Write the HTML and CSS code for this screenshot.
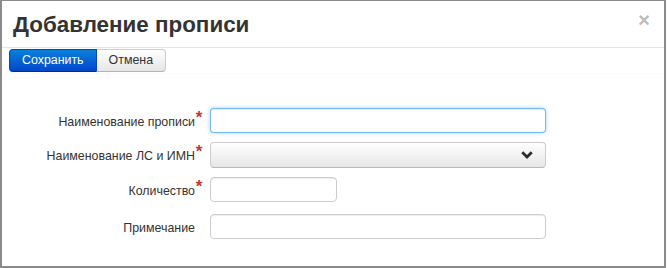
FILE: index.html
```html
<!DOCTYPE html>
<html>
<head>
	<meta charset="utf-8">
	<title>Добавление прописи</title>
	<link rel="stylesheet" href="styles.css">
</head>
<body>
	<div class="modal">
		<div class="modal-header">
			<h3 class="modal-title">Добавление прописи</h3>
			<span class="close">&times;</span>
		</div>

		<div class="toolbar">
			<button class="btn btn-primary">Сохранить</button><button class="btn btn-default">Отмена</button>
		</div>

		<form class="form">
			<div class="form-row">
				<label class="form-label">Наименование прописи<span class="req">*</span></label>
				<input class="form-input focused" type="text">
			</div>
			<div class="form-row">
				<label class="form-label">Наименование ЛС и ИМН<span class="req">*</span></label>
				<div class="form-select">
					<svg class="chevron" width="12" height="8" viewBox="0 0 12 8"><path d="M0.3 2.2 L2.2 0.3 L6 4.1 L9.8 0.3 L11.7 2.2 L6 7.9 Z" fill="#2b2b2b"/></svg>
				</div>
			</div>
			<div class="form-row">
				<label class="form-label">Количество<span class="req">*</span></label>
				<input class="form-input short" type="text">
			</div>
			<div class="form-row note">
				<label class="form-label">Примечание<span class="req hidden">*</span></label>
				<input class="form-input" type="text">
			</div>
		</form>
	</div>
</body>
</html>
```

FILE: styles.css
```css
body {
	margin: 0;
	font-family: "Liberation Sans", Arial, sans-serif;
	color: #333;
	background: #fff;
}
.modal {
	width: 666px;
	height: 268px;
	box-sizing: border-box;
	border: 2px solid #8a8a8a;
	border-top-width: 1px;
	background: #fff;
}
.modal-header {
	display: flex;
	justify-content: space-between;
	align-items: flex-start;
	padding: 9px 14px 7px 11px;
	border-bottom: 1px solid #e5e5e5;
}
.modal-title {
	margin: 0;
	font-size: 22.4px;
	line-height: 30px;
	font-weight: bold;
	color: #333;
}
.close {
	font-size: 20px;
	font-weight: bold;
	line-height: 20px;
	color: #bbb;
	cursor: pointer;
}
.toolbar {
	display: flex;
	padding: 1px 7px 0;
	border-bottom: 1px solid #fafafa;
	height: 24px;
}
.btn {
	height: 23px;
	padding: 0 12px;
	font-family: "Liberation Sans", Arial, sans-serif;
	font-size: 12.4px;
	line-height: 21px;
	border: 1px solid #ccc;
	cursor: pointer;
}
.btn-primary {
	color: #fff;
	background: linear-gradient(to bottom, #0a80dc, #0047c8);
	border-color: #0044cc #0044cc #002a80;
	border-radius: 4px 0 0 4px;
}
.btn-default {
	color: #333;
	background: linear-gradient(to bottom, #fff, #e6e6e6);
	border-color: #ccc #ccc #b3b3b3;
	border-left: none;
	border-radius: 0 4px 4px 0;
}
.form {
	padding-top: 34px;
}
.form-row {
	display: grid;
	grid-template-columns: 201px 336px;
	column-gap: 7px;
	align-items: center;
	margin-bottom: 9px;
}
.form-row.note {
	margin-top: 12px;
}
.form-label {
	text-align: right;
	font-size: 12.4px;
	color: #333;
}
.req {
	display: inline-block;
	width: 8px;
	text-align: center;
	font-size: 17px;
	font-weight: bold;
	line-height: 10px;
	vertical-align: 3px;
	color: #c0392b;
}
.req.hidden {
	visibility: hidden;
}
.form-input {
	box-sizing: border-box;
	height: 25px;
	margin: 0;
	padding: 2px 6px;
	border: 1px solid #ccc;
	border-radius: 4px;
	box-shadow: inset 0 1px 1px rgba(0, 0, 0, 0.075);
	background: #fff;
}
.form-input.short {
	width: 127px;
}
.form-input.focused {
	border-color: rgba(82, 168, 236, 0.8);
	box-shadow: inset 0 1px 1px rgba(0, 0, 0, 0.075), 0 0 4px rgba(82, 168, 236, 0.5);
}
.form-select {
	box-sizing: border-box;
	height: 26px;
	display: flex;
	align-items: center;
	justify-content: flex-end;
	padding-right: 12px;
	border: 1px solid #ccc;
	border-bottom-color: #b8b8b8;
	border-radius: 4px;
	background: linear-gradient(to bottom, #fff, #e6e6e6);
}
```
